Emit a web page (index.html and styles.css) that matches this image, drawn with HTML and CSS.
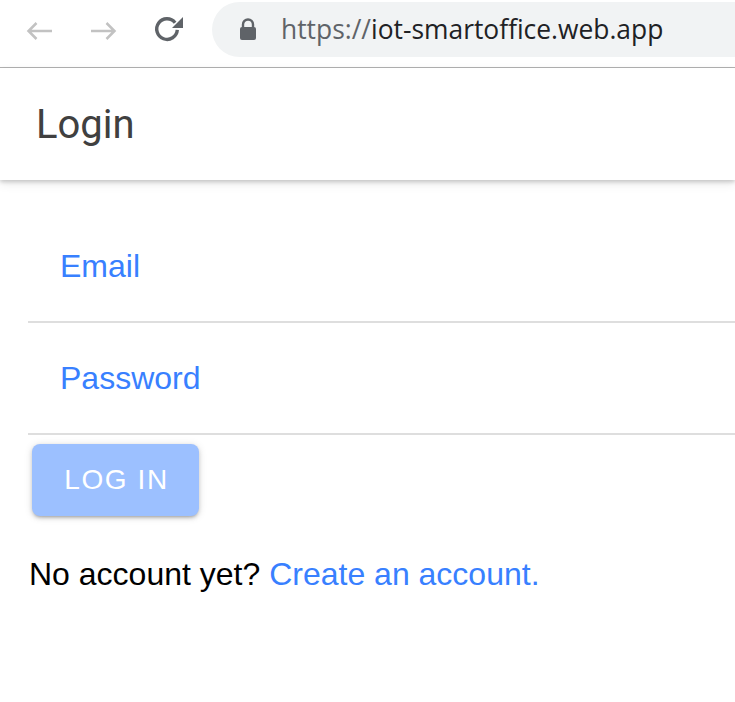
FILE: index.html
```html
<!DOCTYPE html>
<html lang="en">
<head>
<meta charset="utf-8">
<title>Login</title>
<link rel="stylesheet" href="styles.css">
</head>
<body>
<div class="chrome">
  <div class="nav">
    <svg class="icon arrow" width="27" height="20" viewBox="0 0 27 20"><path d="M26 10H2.5M10.5 2L2.5 10l8 8" fill="none" stroke="#c2c2c2" stroke-width="2.5"/></svg>
    <svg class="icon arrow fwd" width="27" height="20" viewBox="0 0 27 20"><path d="M1 10h23.5M16.5 2l8 8-8 8" fill="none" stroke="#c2c2c2" stroke-width="2.5"/></svg>
    <svg class="icon reload" width="32" height="28" viewBox="0 0 32 28"><path d="M25.3 14.9A10.3 10.3 0 1 1 23.1 7.7" fill="none" stroke="#5f6368" stroke-width="3.4"/><path d="M31 2v11H20z" fill="#5f6368"/></svg>
  </div>
  <div class="omnibox">
    <svg class="lock" width="18" height="22" viewBox="0 0 18 22"><path d="M4 9V6.5a5 5 0 0 1 10 0V9" fill="none" stroke="#5f6368" stroke-width="2.4"/><rect x="1" y="9" width="16" height="13" rx="2" fill="#5f6368"/></svg>
    <span class="url"><span class="scheme">https://</span>iot-smartoffice.web.app</span>
  </div>
</div>
<header class="toolbar">
  <h1 class="title">Login</h1>
</header>
<main class="content">
  <div class="list">
    <div class="item"><span class="label">Email</span></div>
    <div class="item"><span class="label">Password</span></div>
  </div>
  <button class="btn" disabled>LOG IN</button>
  <p class="signup">No account yet? <a href="#" class="link">Create an account.</a></p>
</main>
</body>
</html>
```
FILE: styles.css
```css
* { box-sizing: border-box; }
html, body { margin: 0; padding: 0; background: #fff; }
body { width: 735px; height: 702px; overflow: hidden; font-family: "Liberation Sans", Arial, sans-serif; }

.chrome {
  height: 68px;
  display: flex;
  align-items: flex-start;
  border-bottom: 1px solid #b4b4b4;
  background: #fff;
}
.nav {
  display: flex;
  align-items: flex-start;
  padding: 0 0 0 26px;
  height: 60px;
  width: 212px;
}
.icon { display: block; }
.arrow { margin-top: 21px; }
.fwd { margin-left: 37px; }
.reload { margin-left: 35px; margin-top: 15px; }
.omnibox {
  flex: 1;
  margin-top: 2px;
  height: 55px;
  background: #f1f3f4;
  border-radius: 28px 0 0 28px;
  display: flex;
  align-items: center;
  padding-left: 27px;
}
.lock { display: block; margin-top: -2px; }
.url {
  margin-left: 24px;
  font-family: "Open Sans", "Noto Sans", sans-serif;
  font-size: 26.4px;
  color: #202124;
  letter-spacing: 0;
  margin-top: -2px;
}
.scheme { color: #5f6368; }

.toolbar {
  height: 112px;
  display: flex;
  align-items: center;
  padding-left: 36px;
  background: #fff;
  box-shadow: 0 2px 4px rgba(0,0,0,0.18), 0 4px 10px rgba(0,0,0,0.08);
  position: relative;
  z-index: 1;
}
.title {
  margin: 0;
  font-family: Roboto, "Liberation Sans", sans-serif;
  font-weight: 400;
  font-size: 40px;
  color: #404040;
  letter-spacing: 0;
}

.content { padding: 31px 0 0 28px; }
.list { display: flex; flex-direction: column; }
.item {
  height: 112px;
  display: flex;
  align-items: center;
  padding-left: 32px;
  border-bottom: 2px solid #dedede;
}
.label {
  font-size: 32px;
  color: #3880ff;
}
.btn {
  display: block;
  margin: 9px 0 0 4px;
  width: 167px;
  height: 72px;
  border: none;
  border-radius: 8px;
  background: #9cc0ff;
  color: #fff;
  font-family: "Liberation Sans", Arial, sans-serif;
  font-size: 28px;
  letter-spacing: 1.6px;
  padding: 0 0 0 2px;
  box-shadow: 0 3px 3px -2px rgba(0,0,0,0.2), 0 2px 4px 0 rgba(0,0,0,0.14), 0 1px 8px 0 rgba(0,0,0,0.12);
}
.signup {
  margin: 40px 0 0 1px;
  font-size: 32px;
  color: #000;
}
.link { color: #3880ff; text-decoration: none; }
```
